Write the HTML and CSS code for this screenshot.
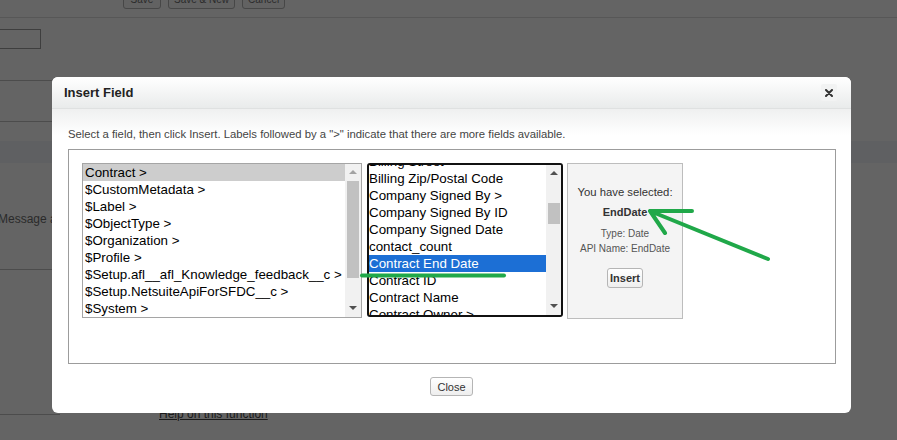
FILE: index.html
```html
<!DOCTYPE html>
<html lang="en">
<head>
    <meta charset="UTF-8">
    <meta name="viewport" content="width=device-width, initial-scale=1.0">
    <title>Insert Field</title>
    <link rel="stylesheet" href="styles.css">
</head>
<body>
    <!-- page behind the modal overlay -->
    <div class="page">
        <div class="toolbar">
            <button class="bg-btn">Save</button>
            <button class="bg-btn">Save &amp; New</button>
            <button class="bg-btn">Cancel</button>
        </div>
        <div class="bg-input"></div>
        <div class="bg-rule rule-1"></div>
        <div class="bg-rule rule-2"></div>
        <div class="bg-band"></div>
        <div class="bg-label">Message a</div>
        <div class="bg-rule rule-3"></div>
        <div class="bg-rule rule-4"></div>
        <a class="bg-help">Help on this function</a>
    </div>

    <div class="dialog">
        <div class="dialog-head">
            <h2>Insert Field</h2>
            <button class="close-x" title="Close">
                <svg width="8" height="8" viewBox="0 0 8 8"><path d="M1 1L7 7M7 1L1 7" stroke="#333" stroke-width="2" stroke-linecap="round"/></svg>
            </button>
        </div>
        <div class="dialog-body">
            <p class="hint">Select a field, then click Insert. Labels followed by a "&gt;" indicate that there are more fields available.</p>
            <div class="picker">
                <div class="list list-left">
                    <div class="items">
                        <div class="item sel-grey">Contract &gt;</div>
                        <div class="item">$CustomMetadata &gt;</div>
                        <div class="item">$Label &gt;</div>
                        <div class="item">$ObjectType &gt;</div>
                        <div class="item">$Organization &gt;</div>
                        <div class="item">$Profile &gt;</div>
                        <div class="item">$Setup.afl__afl_Knowledge_feedback__c &gt;</div>
                        <div class="item">$Setup.NetsuiteApiForSFDC__c &gt;</div>
                        <div class="item">$System &gt;</div>
                    </div>
                    <div class="scrollbar">
                        <span class="arrow up dim"></span>
                        <span class="thumb thumb-left"></span>
                        <span class="arrow down"></span>
                    </div>
                </div>
                <div class="list list-mid">
                    <div class="items scrolled">
                        <div class="item">Billing Street</div>
                        <div class="item">Billing Zip/Postal Code</div>
                        <div class="item">Company Signed By &gt;</div>
                        <div class="item">Company Signed By ID</div>
                        <div class="item">Company Signed Date</div>
                        <div class="item">contact_count</div>
                        <div class="item sel-blue">Contract End Date</div>
                        <div class="item">Contract ID</div>
                        <div class="item">Contract Name</div>
                        <div class="item">Contract Owner &gt;</div>
                    </div>
                    <div class="scrollbar">
                        <span class="arrow up"></span>
                        <span class="thumb thumb-mid"></span>
                        <span class="arrow down"></span>
                    </div>
                </div>
                <div class="selected">
                    <div class="sel-title">You have selected:</div>
                    <div class="sel-name">EndDate</div>
                    <div class="sel-meta">Type: Date</div>
                    <div class="sel-meta tight">API Name: EndDate</div>
                    <button class="btn insert">Insert</button>
                </div>
            </div>
            <div class="actions">
                <button class="btn">Close</button>
            </div>
        </div>
    </div>

    <!-- hand drawn annotation -->
    <svg class="marks" width="897" height="440" viewBox="0 0 897 440">
        <g stroke="#20a849" stroke-width="4" stroke-linecap="round" fill="none">
            <path d="M362 275.5H504"/>
            <path d="M768 259L650 211M650 211L692 211M650 211L665 233"/>
        </g>
    </svg>
</body>
</html>
```

FILE: styles.css
```css
body {
    margin: 0;
    width: 897px;
    height: 440px;
    overflow: hidden;
    position: relative;
    background-color: #646464;
    font-family: 'Liberation Sans', Arial, sans-serif;
    color: #222;
}

/* background page */
.page {
    height: 440px;
    overflow: hidden;
}

.toolbar {
    height: 17px;
    border-bottom: 1px solid #575757;
    display: flex;
    gap: 7px;
    padding-left: 123px;
}

.bg-btn {
    margin-top: -11px;
    min-width: 38px;
    height: 20px;
    padding: 0 5px;
    font-family: inherit;
    font-size: 10px;
    color: #2b2b2b;
    background-color: #626262;
    border: 1px solid #474747;
    border-radius: 3px;
}

.bg-input {
    margin-top: 11px;
    margin-left: -2px;
    width: 41px;
    height: 18px;
    border: 1px solid #3e3e3e;
}

.bg-rule {
    height: 1px;
    width: 60px;
    background-color: #4c4c4c;
}

.rule-1 { margin-top: 31px; }
.rule-2 { margin-top: 40px; }
.rule-3 { margin-top: 43px; }
.rule-4 { margin-top: 144px; }

.bg-band {
    margin-top: 19px;
    height: 22px;
    background-color: #5f6062;
}

.bg-label {
    margin-top: 49px;
    margin-left: -2px;
    font-size: 12px;
    line-height: 14px;
    color: #2a2a2a;
}

.bg-help {
    display: block;
    margin-top: -8px;
    margin-left: 159px;
    font-size: 12px;
    line-height: 14px;
    color: #1a1a1a;
    text-decoration: underline;
}

/* modal */
.dialog {
    position: absolute;
    left: 52px;
    top: 77px;
    width: 799px;
    height: 336px;
    background-color: #fff;
    border-radius: 6px;
    overflow: hidden;
}

.dialog-head {
    height: 31px;
    border-bottom: 1px solid #dfe1e1;
    background: linear-gradient(#ffffff, #e9ebeb);
    display: flex;
    align-items: center;
    justify-content: space-between;
    padding: 0 14px 0 12px;
}

.dialog-head h2 {
    margin: 0;
    font-size: 13px;
    font-weight: bold;
    color: #222;
}

.close-x {
    width: 16px;
    height: 17px;
    padding: 0;
    display: flex;
    align-items: center;
    justify-content: center;
    background-color: #f2f3f3;
    border: none;
    border-radius: 2px;
}

.dialog-body {
    padding: 19px 15px 0 16px;
    background: linear-gradient(#eff0f0, #ffffff 26px);
}

.hint {
    margin: 0 0 8px;
    font-size: 11.3px;
    line-height: 13px;
    color: #444;
}

.picker {
    width: 740px;
    height: 187px;
    border: 1px solid #9c9c9c;
    padding: 13px;
    display: flex;
    align-items: flex-start;
    background-color: #fff;
}

.list {
    display: flex;
    height: 153px;
    overflow: hidden;
    background-color: #fff;
    font-size: 13.33px;
    line-height: 17px;
    color: #000;
}

.list-left {
    width: 278px;
    border: 1px solid #a5a5a5;
}

.list-mid {
    width: 192px;
    height: 150px;
    margin-left: 5px;
    border: 2px solid #111;
    border-radius: 3px;
}

.items {
    flex: 1;
    overflow: hidden;
}

.items.scrolled {
    margin-top: -12px;
}

.item {
    height: 17px;
    padding-left: 2px;
    white-space: nowrap;
}

.list-mid .item {
    padding-left: 0;
}

.sel-grey {
    background-color: #cdcdcd;
}

.sel-blue {
    background-color: #1c6fd5;
    color: #fff;
}

.scrollbar {
    width: 16px;
    background-color: #f1f1f1;
    display: flex;
    flex-direction: column;
    align-items: center;
}

.list-mid .scrollbar {
    width: 15px;
}

.arrow {
    width: 0;
    height: 0;
    border-left: 4px solid transparent;
    border-right: 4px solid transparent;
}

.arrow.up {
    margin-top: 6px;
    border-bottom: 4px solid #505050;
}

.arrow.up.dim {
    border-bottom-color: #a3a3a3;
}

.arrow.down {
    margin-top: auto;
    margin-bottom: 7px;
    border-top: 4px solid #505050;
}

.thumb {
    width: 12px;
    background-color: #c1c1c1;
}

.thumb-left {
    margin-top: 7px;
    height: 97px;
}

.thumb-mid {
    margin-top: 28px;
    height: 21px;
}

.selected {
    width: 114px;
    height: 154px;
    margin-left: 4px;
    border: 1px solid #bdbdbd;
    background-color: #f4f4f4;
    display: flex;
    flex-direction: column;
    align-items: center;
    color: #333;
}

.sel-title {
    margin-top: 22px;
    font-size: 11.3px;
    line-height: 13px;
}

.sel-name {
    margin-top: 7px;
    font-size: 11px;
    line-height: 13px;
    font-weight: bold;
}

.sel-meta {
    margin-top: 9px;
    font-size: 10px;
    line-height: 12px;
    color: #555;
}

.sel-meta.tight {
    margin-top: 3px;
}

.btn {
    height: 20px;
    padding: 0 5px;
    font-family: inherit;
    font-size: 11px;
    color: #333;
    background: linear-gradient(#ffffff, #eeeeee);
    border: 1px solid #b5b5b5;
    border-radius: 3px;
}

.insert {
    margin-top: 13px;
    padding: 0 2px;
    font-weight: bold;
}

.actions {
    display: flex;
    justify-content: center;
    padding-top: 13px;
    padding-right: 1px;
}

.actions .btn {
    height: 19px;
    padding: 0 6px;
}

.marks {
    position: absolute;
    left: 0;
    top: 0;
    pointer-events: none;
}
```
